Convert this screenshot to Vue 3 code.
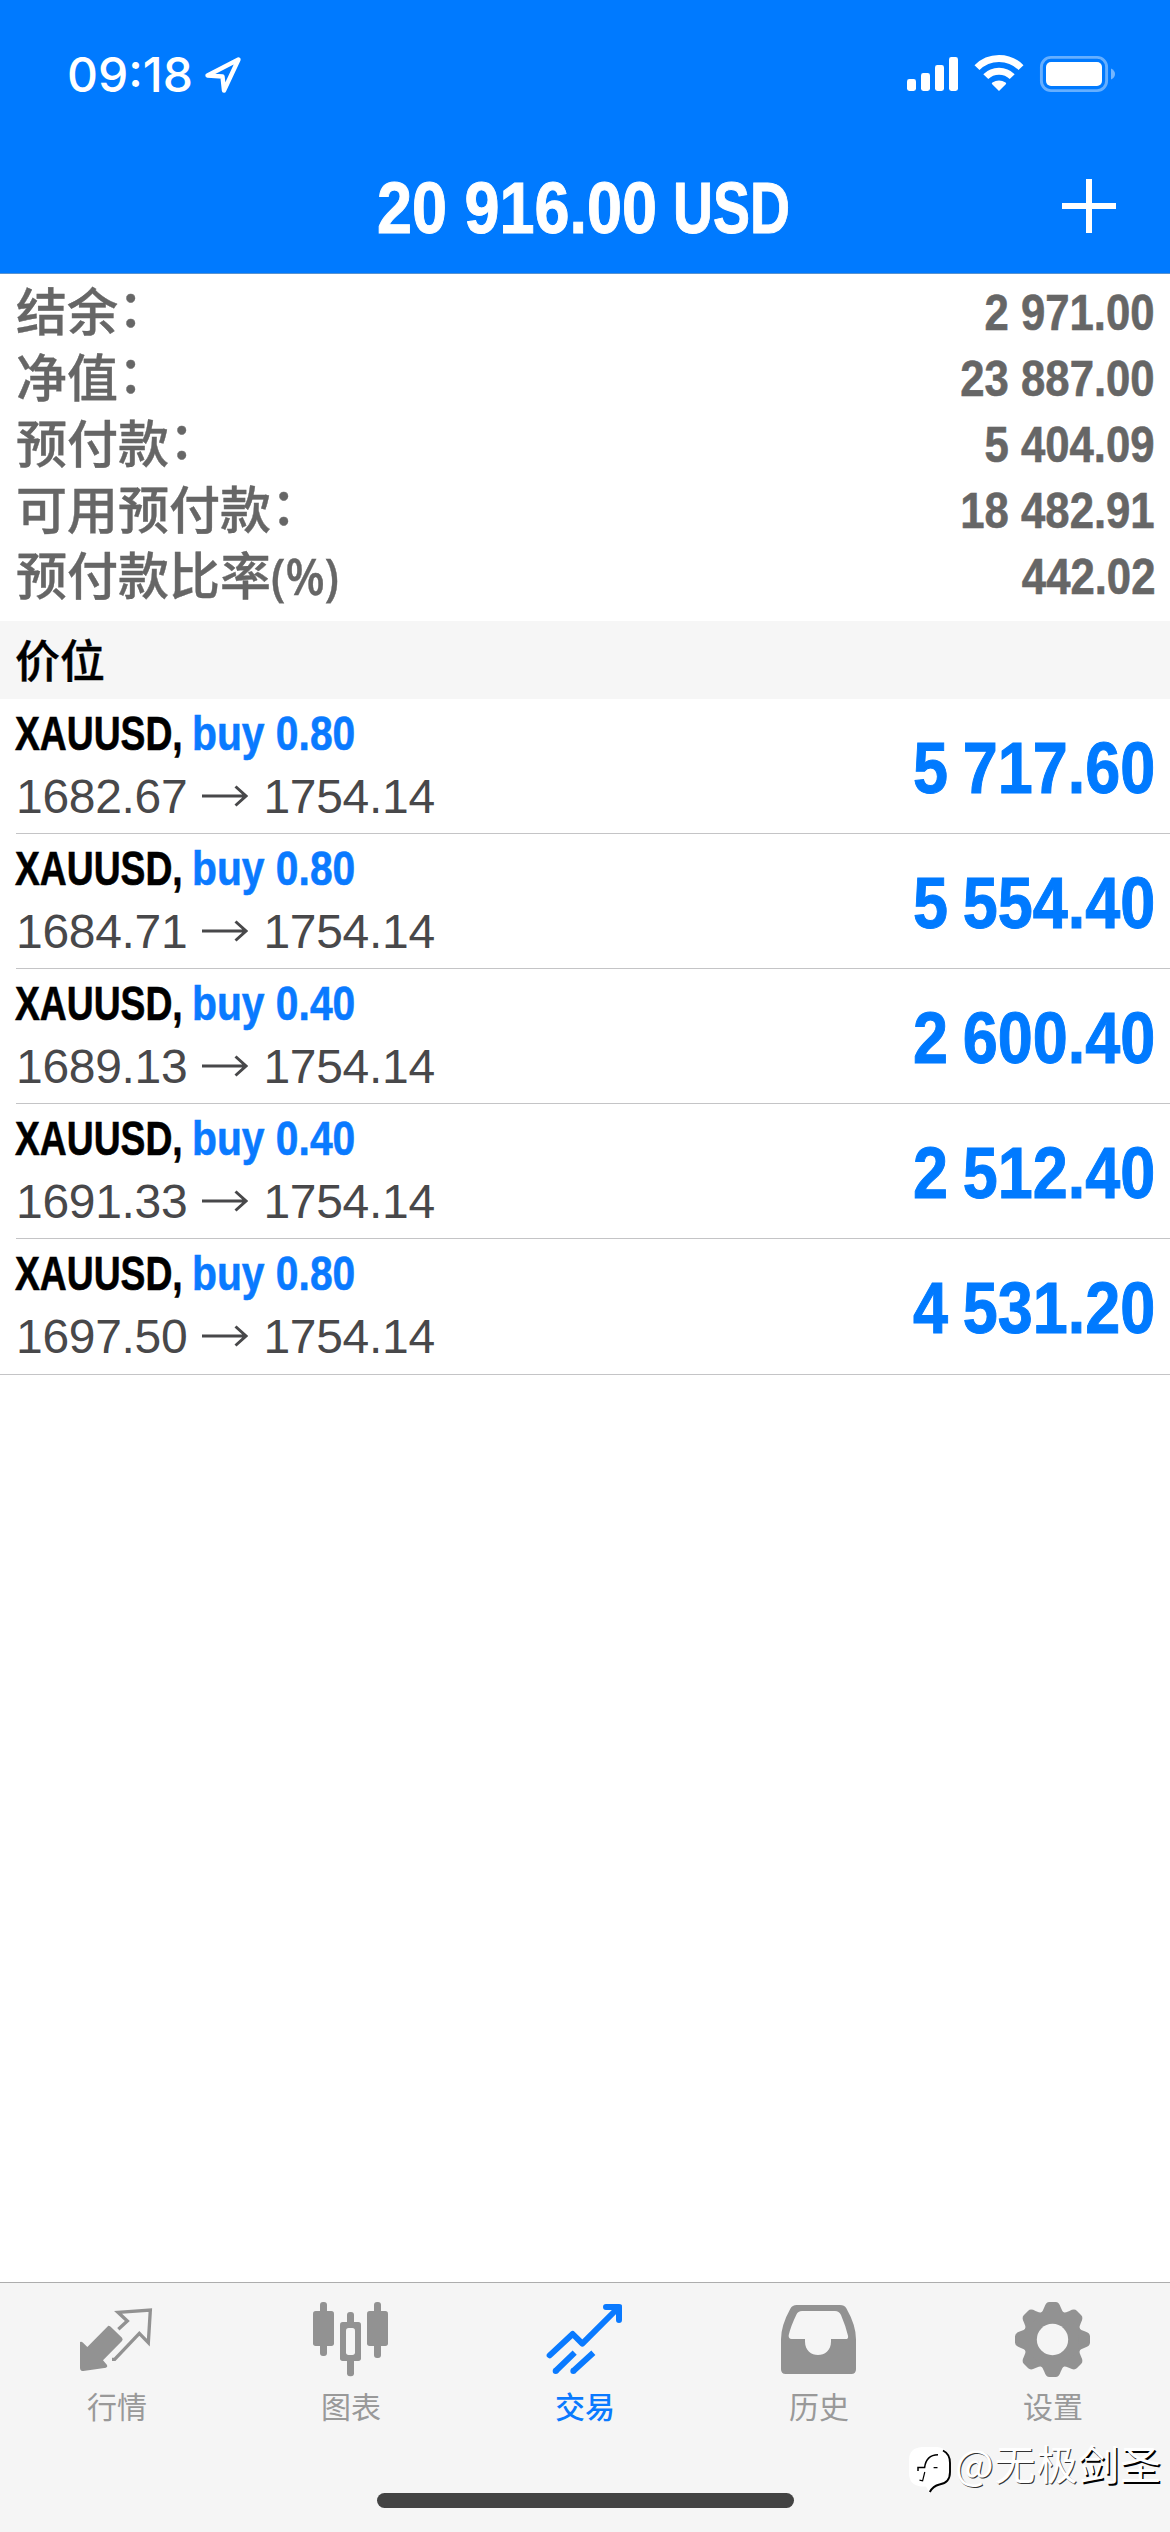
<script setup>
const summary = [
  { label: '结余', suffix: '：', value: '2 971.00' },
  { label: '净值', suffix: '：', value: '23 887.00' },
  { label: '预付款', suffix: '：', value: '5 404.09' },
  { label: '可用预付款', suffix: '：', value: '18 482.91' },
  { label: '预付款比率', suffix: '(%)', value: '442.02' },
]

const positions = [
  { symbol: 'XAUUSD,', side: 'buy 0.80', open: '1682.67', current: '1754.14', profit: '5 717.60' },
  { symbol: 'XAUUSD,', side: 'buy 0.80', open: '1684.71', current: '1754.14', profit: '5 554.40' },
  { symbol: 'XAUUSD,', side: 'buy 0.40', open: '1689.13', current: '1754.14', profit: '2 600.40' },
  { symbol: 'XAUUSD,', side: 'buy 0.40', open: '1691.33', current: '1754.14', profit: '2 512.40' },
  { symbol: 'XAUUSD,', side: 'buy 0.80', open: '1697.50', current: '1754.14', profit: '4 531.20' },
]
</script>

<template>
  <div class="screen">
    <header class="header">
      <div class="status">
        <span class="clock">09:18</span>
        <svg class="location" width="38" height="38" viewBox="0 0 38 38">
          <path d="M34.5 3.5 3.5 19.5 18.5 20.5 20 34.5Z" fill="none" stroke="#fff" stroke-width="4.4" stroke-linejoin="round" />
        </svg>
        <svg class="indicators" width="210" height="40" viewBox="906 54 210 40">
          <g fill="#fff">
            <rect x="907" y="79" width="9" height="12" rx="2.4" />
            <rect x="921" y="73" width="9" height="18" rx="2.4" />
            <rect x="935" y="65" width="9" height="26" rx="2.4" />
            <rect x="949" y="57" width="9" height="34" rx="2.4" />
            <path d="M999 91 992.2 84.2C991.6 83.6 991.8 82.9 992.4 82.4Q999 78.4 1005.6 82.4C1006.2 82.9 1006.4 83.6 1005.8 84.2Z" />
          </g>
          <g fill="none" stroke="#fff" stroke-width="7">
            <path d="M977 67.6C989 55.4 1009 55.4 1021 67.6" />
            <path d="M985.8 76.6C993 69.3 1005 69.3 1012.2 76.6" />
          </g>
          <rect x="1041.4" y="57.4" width="65.2" height="33.2" rx="9.5" fill="none" stroke="#fff" stroke-opacity=".4" stroke-width="2.9" />
          <rect x="1046" y="62" width="56" height="24" rx="5" fill="#fff" />
          <path d="M1111 68.5Q1115 70.5 1115 74T1111 79.5Z" fill="#fff" fill-opacity=".45" />
        </svg>
      </div>
      <div class="navbar">
        <h1 class="title"><span class="amount">20 916.00</span><span class="currency">USD</span></h1>
        <svg class="plus" width="54" height="54" viewBox="0 0 54 54">
          <path d="M27 0V54M0 27H54" stroke="#fff" stroke-width="6" />
        </svg>
      </div>
    </header>

    <section class="summary">
      <div v-for="row in summary" :key="row.label" class="summary-row">
        <span class="label">{{ row.label }}<span :class="row.suffix === '：' ? 'colon' : 'unit'">{{ row.suffix }}</span></span>
        <span class="value">{{ row.value }}</span>
      </div>
    </section>

    <h2 class="section-title">价位</h2>

    <ul class="positions">
      <li v-for="p in positions" :key="p.open" class="position">
        <div class="details">
          <div class="deal"><span class="symbol">{{ p.symbol }}</span><span class="side">{{ p.side }}</span></div>
          <div class="prices">
            <span>{{ p.open }}</span>
            <svg width="46" height="22" viewBox="0 0 46 22">
              <path d="M0 11H44M33.5 1.500 44 11 33.5 20.500" fill="none" stroke="#48484a" stroke-width="3" />
            </svg>
            <span>{{ p.current }}</span>
          </div>
        </div>
        <span class="profit">{{ p.profit }}</span>
      </li>
    </ul>

    <div class="blank"></div>

    <nav class="tabs">
      <a class="tab">
        <svg viewBox="231 114 240 240">
          <path d="M325 197Q329 197 332 200L366 233Q370 238 366 243L309 301 321 315Q324 320 318 323L250 333Q240 333 240 323V246Q245 244 249 248L262 261Z" fill="#929292" />
          <path d="M355 208 382 183 354 157 451 150 445 248 418 220 344 298H336" fill="none" stroke="#929292" stroke-width="10" />
        </svg>
        <span>行情</span>
      </a>
      <a class="tab">
        <svg viewBox="933 114 240 240">
          <g fill="#929292">
            <rect x="960" y="126" width="21" height="162" rx="9" />
            <rect x="939" y="153" width="63" height="105" rx="8" />
            <rect x="1122" y="126" width="21" height="168" rx="9" />
            <rect x="1101" y="153" width="63" height="105" rx="8" />
            <rect x="1041" y="156" width="21" height="60" rx="9" />
            <rect x="1041" y="280" width="21" height="69" rx="9" />
            <rect x="1020" y="186" width="63" height="117" rx="8" />
          </g>
          <rect x="1038" y="204" width="27" height="81" rx="8" fill="#f5f5f5" />
        </svg>
        <span>图表</span>
      </a>
      <a class="tab active">
        <svg viewBox="285 114 240 240">
          <g fill="none" stroke="#0a7aff" stroke-width="18" stroke-linejoin="round">
            <path d="M299 286 368 222 397 251 504 144" stroke-linecap="round" />
            <path d="M468 141H507V180" stroke-linecap="round" />
            <path d="M317 333 374 278M370 333 430 278" />
          </g>
          <g fill="#0a7aff">
            <circle cx="317" cy="333" r="9" />
            <circle cx="370" cy="333" r="9" />
            <path d="M482 134H515V172L505 163 482 144Z" />
          </g>
        </svg>
        <span>交易</span>
      </a>
      <a class="tab">
        <svg viewBox="987 114 240 240">
          <path fill="#929292" fill-rule="evenodd" d="M1040 135H1170Q1183 135 1189 145Q1218 196 1218 238V328Q1218 342 1204 342H1007Q993 342 993 328V238Q993 196 1021 146Q1027 135 1040 135ZM1056 153Q1044 153 1039 164Q1022 199 1016 226Q1015 237 1025 237H1065V245C1065 298 1143 298 1143 245V237H1187Q1196 237 1194 227Q1187 198 1173 165Q1167 153 1155 153Z" />
        </svg>
        <span>历史</span>
      </a>
      <a class="tab">
        <svg viewBox="489 114 240 240">
          <g fill="#929292">
            <circle cx="607.5" cy="238.5" r="88" />
            <g v-for="n in 8" :key="n" :transform="`rotate(${n * 45} 607.5 238.5)`">
              <path d="M572 160Q579 154 583 142Q588 126 598 126H617Q627 126 632 142Q636 154 643 160Z" />
            </g>
          </g>
          <circle cx="607.5" cy="238.5" r="47" fill="#f5f5f5" />
        </svg>
        <span>设置</span>
      </a>
      <div class="home-indicator"></div>
      <div class="watermark">
        <svg width="44" height="48" viewBox="0 0 44 48">
          <path d="M13 0H28Q40.500 1 40.500 14V26Q40.500 37 29 38.500Q24 40 20.500 46L17 39.500H12Q0 38 0 26V13Q0 1 13 0Z" fill="#fff" />
          <path d="M34 3.500Q41 7 41 16V25Q41 36 30.500 37.500Q24 39 20.800 45" fill="none" stroke="#000" stroke-width="1.900" />
          <path d="M9 24V20.600H15.600Q17 8 29 7.700" fill="none" stroke="#000" stroke-width="1.500" />
          <path d="M15.800 25 13.600 33.800 10.500 33.200M24.600 20.600H28.500" fill="none" stroke="#000" stroke-width="1.200" />
        </svg>
        <span>@无极<b>剑圣</b></span>
      </div>
    </nav>
  </div>
</template>

<style>
body {
  margin: 0;
}
</style>

<style scoped>
.screen {
  display: flex;
  flex-direction: column;
  width: 1170px;
  height: 2532px;
  overflow: hidden;
  background: #fff;
  font-family: "Liberation Sans", "Noto Sans CJK SC", sans-serif;
}

svg {
  display: block;
  flex: none;
}

.header {
  flex: none;
  box-sizing: border-box;
  height: 274px;
  border-bottom: 1px solid #5a93cf;
  background: #007aff;
  color: #fff;
}

.status {
  display: flex;
  align-items: center;
  height: 148px;
  padding: 0 54px 0 67px;
}

.clock {
  width: 137px;
  margin-top: 2px;
  font: 500 48px/60px Inter, sans-serif;
  white-space: nowrap;
}

.location {
  margin-top: 2px;
}

.indicators {
  margin-left: auto;
}

.navbar {
  display: flex;
  align-items: center;
  height: 116px;
  padding: 0 54px 0 377px;
}

.title {
  display: flex;
  margin: 3px 0 0;
  font-size: 72px;
  line-height: 84px;
  font-weight: 700;
  white-space: nowrap;
  -webkit-text-stroke: 1px currentColor;
}

.amount {
  width: 296px;
  transform: scaleX(.874);
  transform-origin: left;
}

.currency {
  width: 120px;
  transform: scaleX(.77);
  transform-origin: left;
}

.plus {
  margin-left: auto;
}

.summary {
  flex: none;
  box-sizing: border-box;
  height: 347px;
  padding: 5px 16px 0;
  color: #666;
}

.summary-row {
  display: flex;
  justify-content: space-between;
  height: 66px;
  line-height: 66px;
  white-space: nowrap;
}

.label {
  padding-top: 2px;
  font-size: 51px;
  font-weight: 500;
  -webkit-text-stroke: .4px currentColor;
}

.colon {
  display: inline-block;
  line-height: 1;
  transform: translateY(-4px);
}

.unit {
  display: inline-block;
  font-family: "Open Sans", sans-serif;
  font-weight: 600;
  line-height: 1;
  transform: scaleX(.89);
  transform-origin: left;
}

.value {
  padding-top: 1px;
  font-size: 50.5px;
  font-weight: 700;
  transform: translateX(1px) scaleX(.865);
  transform-origin: right;
  -webkit-text-stroke: .6px currentColor;
}

.section-title {
  flex: none;
  height: 78px;
  margin: 0;
  padding-left: 15px;
  background: #f6f6f6;
  color: #000;
  font: 500 45px/76px "Noto Sans CJK SC", sans-serif;
  -webkit-text-stroke: .4px currentColor;
}

.positions {
  flex: none;
  margin: 0;
  padding: 0;
  border-bottom: 1px solid #c4c4c6;
  list-style: none;
}

.position {
  display: flex;
  justify-content: space-between;
  box-sizing: border-box;
  height: 135px;
  margin-left: 16px;
  padding-right: 15px;
  border-bottom: 1px solid #c4c4c6;
}

.position:last-child {
  border-bottom: 0;
}

.details {
  padding-top: 4px;
}

.deal {
  display: flex;
  height: 62px;
  font-size: 48px;
  font-weight: 700;
  line-height: 62px;
  white-space: nowrap;
  -webkit-text-stroke: .6px currentColor;
}

.symbol {
  width: 175.5px;
  color: #000;
  transform: translateX(-1px) scaleX(.776);
  transform-origin: left;
}

.side {
  width: 180px;
  color: #0a7aff;
  transform: scaleX(.85);
  transform-origin: left;
}

.prices {
  display: flex;
  align-items: center;
  gap: 15px;
  height: 64px;
  color: #48484a;
  font-size: 48px;
  letter-spacing: -.3px;
  line-height: 64px;
}

.prices svg {
  margin-bottom: 2px;
}

.profit {
  color: #007aff;
  font-size: 72px;
  font-weight: 700;
  line-height: 138px;
  word-spacing: -3px;
  white-space: nowrap;
  transform: scaleX(.874);
  transform-origin: right;
  -webkit-text-stroke: 1px currentColor;
}

.blank {
  flex: 1;
}

.tabs {
  position: relative;
  display: flex;
  flex: none;
  box-sizing: border-box;
  height: 250px;
  padding-top: 15px;
  border-top: 1px solid #adadad;
  background: #f5f5f5;
}

.tab {
  display: flex;
  flex: 1;
  flex-direction: column;
  align-items: center;
  color: #999;
  font: 400 30px/44px "Noto Sans CJK SC", sans-serif;
}

.tab svg {
  width: 80px;
  height: 80px;
}

.tab span {
  margin-top: 5px;
}

.tab.active {
  color: #0a7aff;
  font-weight: 500;
}

.home-indicator {
  position: absolute;
  left: 377px;
  bottom: 24px;
  width: 417px;
  height: 15px;
  border-radius: 8px;
  background: #434343;
}

.watermark {
  position: absolute;
  left: 909px;
  bottom: 39px;
  display: flex;
  align-items: flex-start;
  gap: 2px;
  height: 46px;
  color: #fff;
  font: 400 41px/46px "Noto Sans CJK SC", sans-serif;
  letter-spacing: .8px;
  text-shadow: 1px 1px 0 #333;
  white-space: nowrap;
}

.watermark span {
  margin-top: -8px;
}

.watermark b {
  font-weight: 400;
  text-shadow: 1.5px 1.5px 0 #000;
}
</style>
